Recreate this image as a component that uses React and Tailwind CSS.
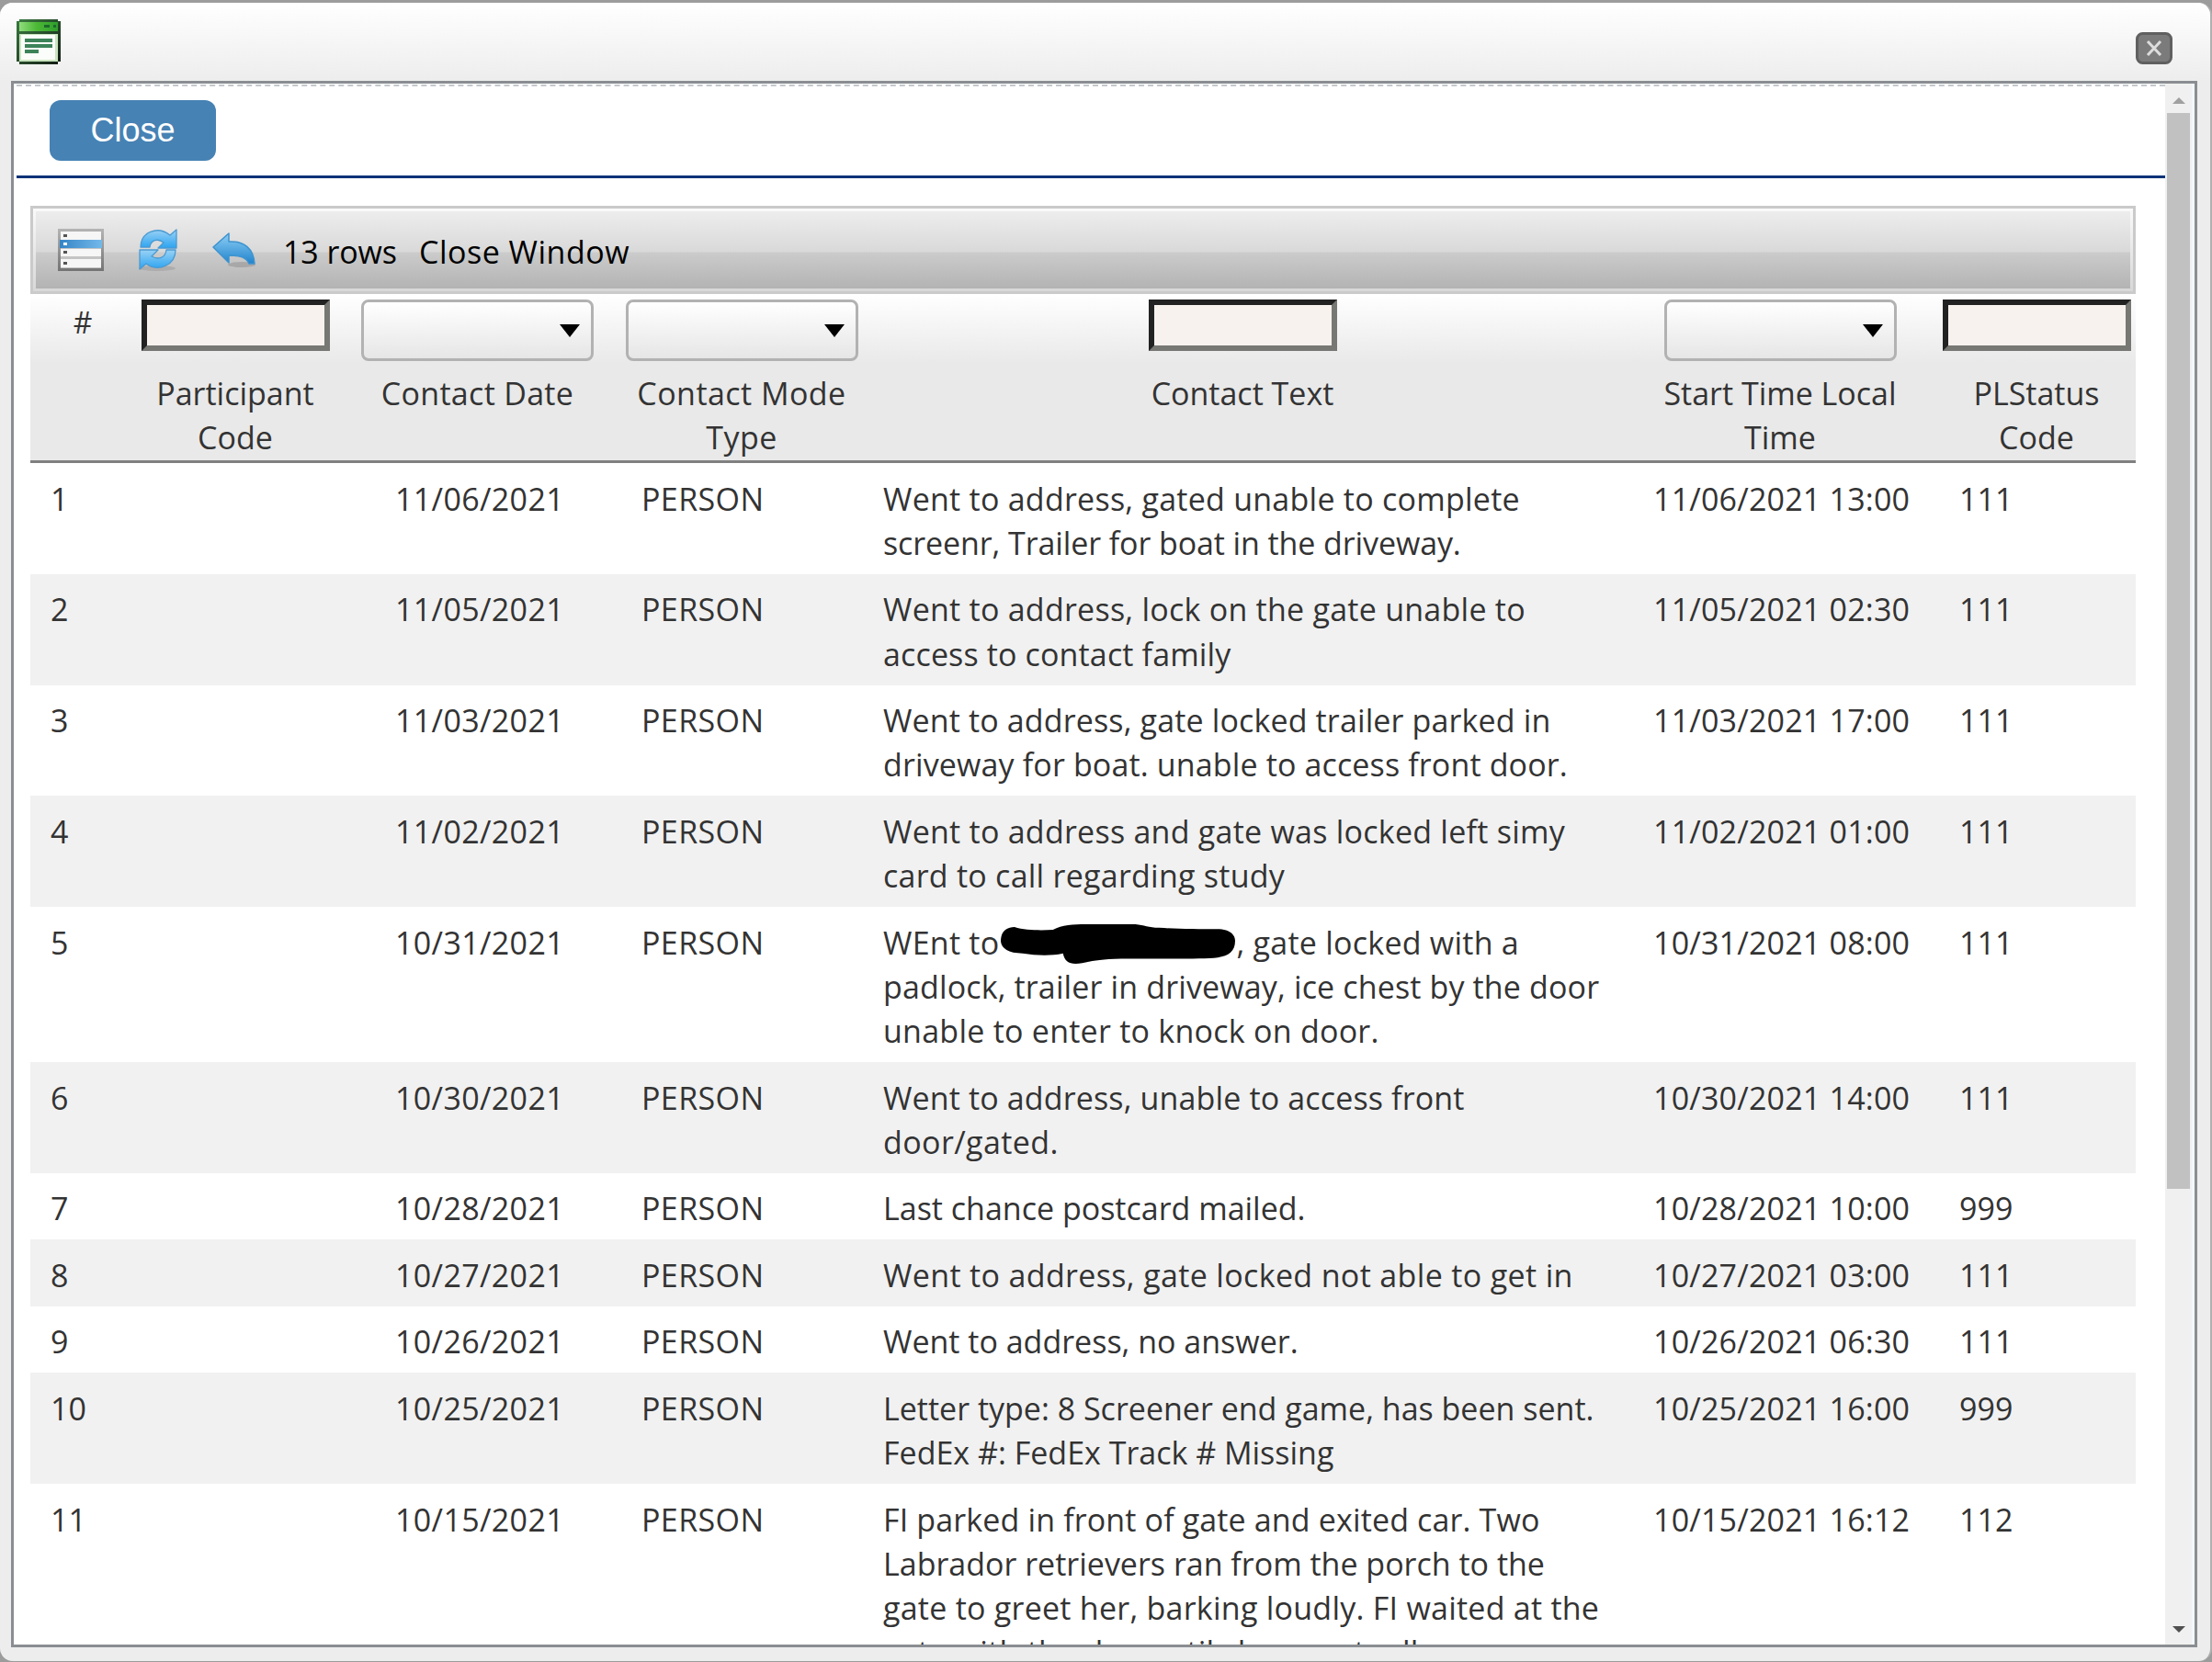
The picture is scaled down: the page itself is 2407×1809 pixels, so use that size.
import React from 'react';

const snug = 'tracking-[-0.1px]';
const loose = 'tracking-[0.14px]';
const wide = 'tracking-[0.25px]';

const rows = [
	['11/06/2021', '13:00', '111', [['Went to address, gated unable to complete', wide], ['screenr, Trailer for boat in the driveway.', snug]]],
	['11/05/2021', '02:30', '111', [['Went to address, lock on the gate unable to', wide], ['access to contact family', loose]]],
	['11/03/2021', '17:00', '111', [['Went to address, gate locked trailer parked in', loose], ['driveway for boat. unable to access front door.', loose]]],
	['11/02/2021', '01:00', '111', [['Went to address and gate was locked left simy', wide], ['card to call regarding study', wide]]],
	['10/31/2021', '08:00', '111', [[<Redacted key="r" />, wide], ['padlock, trailer in driveway, ice chest by the door', loose], ['unable to enter to knock on door.', wide]]],
	['10/30/2021', '14:00', '111', [['Went to address, unable to access front', loose], ['door/gated.', 'tracking-[0.4px]']]],
	['10/28/2021', '10:00', '999', [['Last chance postcard mailed.']]],
	['10/27/2021', '03:00', '111', [['Went to address, gate locked not able to get in', 'tracking-[0.35px]']]],
	['10/26/2021', '06:30', '111', [['Went to address, no answer.']]],
	['10/25/2021', '16:00', '999', [['Letter type: 8 Screener end game, has been sent.'], ['FedEx #: FedEx Track # Missing']]],
	['10/15/2021', '16:12', '112', [['FI parked in front of gate and exited car. Two', loose], ['Labrador retrievers ran from the porch to the'], ['gate to greet her, barking loudly. FI waited at the', wide], ['gate with the dog until she eventually', wide]]],
];

const cols = 'grid grid-cols-[114px_218px_309px_266px_824px_346px_212px]';

function Redacted() {
	return (
		<span className="flex">
			<span>WEnt to</span>
			<svg className="mt-[4px] ml-[1px] h-[43px] w-[257px] shrink-0" viewBox="0 1 258 57" preserveAspectRatio="none">
				<path d="M1 26C1 12 6 6 16 5C28 10 45 10 58 9C68 2 80 1 94 1H148C158 2 162 6 174 6C194 8 215 8 240 8C250 9 257 15 257 25C257 40 250 47 238 49C218 52 165 50 125 51C108 52 100 54 90 57C77 60 71 56 69 43C55 47 40 46 25 43C9 43 2 36 1 26Z" />
			</svg>
			<span>, gate locked with a</span>
		</span>
	);
}

function Field() {
	return <div className="mt-[6px] h-[56px] w-[205px] border-[6px] border-t-[#222222] border-l-[#222222] border-r-[#777874] border-b-[#777874] bg-[#f7f2ee]" />;
}

function Dropdown() {
	return (
		<div className="mt-[6px] flex h-[67px] w-[253px] items-start justify-end rounded-lg border-[3px] border-[#b2b2b2] bg-linear-to-b from-white to-[#e6e6e6] pt-[23px] pr-[11px]">
			<svg width="24" height="16" viewBox="0 0 24 16"><path d="M1 1H23L12 15Z" /></svg>
		</div>
	);
}

function Heading({ control, lines, className }) {
	return (
		<div className="flex flex-col items-center">
			<div className="h-[84px]">{control}</div>
			{lines.map(l => <div key={l} className={`whitespace-nowrap ${className || ''}`}>{l}</div>)}
		</div>
	);
}

function WindowIcon() {
	return (
		<svg className="h-[49px] w-[48px]" viewBox="0 0 48 49">
			<defs>
				<linearGradient id="win" x2="1"><stop stopColor="#8fdc7c" /><stop offset=".45" stopColor="#4cb836" /><stop offset="1" stopColor="#2f9e2c" /></linearGradient>
				<linearGradient id="edge" x2="1" y2="1"><stop stopColor="#3b7a42" /><stop offset="1" stopColor="#111a12" /></linearGradient>
			</defs>
			<path d="M3 0H45V2H48V46H45V49H3V46H0V2H3Z" fill="url(#edge)" />
			<path d="M3 3H45V13H3Z" fill="url(#win)" />
			<path d="M3 16H45V46H3Z" fill="#c9e4bf" />
			<path d="M5 17H42V44H5Z" fill="#fbfdfa" />
			<path d="M30 6H36V9H30ZM40 6H43V9H40Z" fill="#1c6a2c" />
			<path d="M9 21H39V25H9ZM9 27H39V31H9ZM9 33H24V37H9Z" fill="#3d8359" />
		</svg>
	);
}

function ListIcon() {
	return (
		<svg className="h-[46px] w-[50px]" viewBox="0 0 50 46">
			<defs>
				<linearGradient id="sel" x2="1"><stop stopColor="#3585c6" /><stop offset="1" stopColor="#72b8ea" /></linearGradient>
				<linearGradient id="frame" x2="0" y2="1"><stop stopColor="#b4b4b4" /><stop offset="1" stopColor="#747474" /></linearGradient>
			</defs>
			<path d="M0 0H50V46H0Z" fill="url(#frame)" />
			<path d="M3 3H47V43H3Z" fill="#c4c4c4" />
			<path d="M3 3H47V12H3ZM3 22H47V30H3ZM3 33H47V42H3Z" fill="#f6f6f6" />
			<path d="M2 12H48V21H2Z" fill="url(#sel)" />
			<path d="M6 6H10V9H6ZM6 24H10V27H6ZM6 36H10V39H6Z" fill="#555" />
			<path d="M6 15H10V18H6Z" fill="#fff" />
		</svg>
	);
}

function RefreshIcon() {
	return (
		<svg className="h-[46px] w-[46px]" viewBox="0 0 46 46">
			<defs><linearGradient id="ref" x2="0" y2="1"><stop stopColor="#9ad2f5" /><stop offset="1" stopColor="#2ba3f0" /></linearGradient></defs>
			<ellipse cx="22" cy="43" rx="20" ry="3" fill="#999" opacity=".5" />
			<g fill="url(#ref)" stroke="#4b9ad2" strokeWidth="1.3" strokeLinejoin="round">
				<path d="M4 20C4 4 22 -4 36 7L43 1V21H23L29 15C23 10 15 12 14 20Z" />
				<path d="M42 23C42 39 24 48 10 38L3 44V23H23L16 30C23 34 31 32 32 23Z" />
			</g>
		</svg>
	);
}

function BackIcon() {
	return (
		<svg className="h-[40px] w-[48px]" viewBox="0 0 48 40">
			<defs><linearGradient id="back" x2="0" y2="1"><stop stopColor="#8ed0f7" /><stop offset="1" stopColor="#2183cb" /></linearGradient></defs>
			<ellipse cx="32" cy="36" rx="15" ry="3" fill="#888" opacity=".45" />
			<path d="M1 17L18 2V11C35 10 45 19 46 35H40C37 28 30 26 18 26V34Z" fill="url(#back)" stroke="#3e93cf" strokeWidth="1.5" strokeLinejoin="round" />
		</svg>
	);
}

function Toolbar() {
	return (
		<div className="h-[96px] border-[3px] border-[#cacaca] bg-linear-to-b from-[#fafafa] to-[#d8d8d8] p-[3px]">
			<div className="flex h-[84px] items-center bg-[linear-gradient(to_bottom,#ededed_0%,#d9d9d9_52%,#cbcbcb_54%,#b3b3b3_100%)] pl-[24px] text-black">
				<ListIcon />
				<div className="ml-[36px]"><RefreshIcon /></div>
				<div className="ml-[36px]"><BackIcon /></div>
				<span className="ml-[29px] w-[148px] pt-[4px] tracking-[-0.1px] whitespace-nowrap">13 rows</span>
				<span className="pt-[4px] tracking-[0.5px] whitespace-nowrap">Close Window</span>
			</div>
		</div>
	);
}

function Scrollbar() {
	return (
		<div className="flex w-[32px] shrink-0 flex-col border-r-[3px] border-[#f2f7fa] bg-[#f0f0f0] pl-[2px]">
			<div className="flex h-[32px] w-[25px] justify-center pt-[15px]">
				<svg width="14" height="7" viewBox="0 0 14 7"><path d="M0 7L7 0L14 7Z" fill="#a0a0a0" /></svg>
			</div>
			<div className="h-[1171px] w-[25px] bg-[#c1c1c1]" />
			<div className="mt-auto flex h-[20px] w-[25px] justify-center">
				<svg width="14" height="7" viewBox="0 0 14 7"><path d="M0 0H14L7 7Z" fill="#505050" /></svg>
			</div>
		</div>
	);
}

export default function App() {
	return (
		<div className="h-[1809px] w-[2407px] overflow-hidden bg-[#9c9c9c] pt-[3px] font-['Open_Sans','Noto_Sans',sans-serif] text-[34px] leading-[48.25px] text-[#333333]">
			<div className="flex h-[1805px] flex-col rounded-[14px] border-r-2 border-[#b0b0b0] bg-[#ededed] pr-[14px] pb-[15px] pl-[12px]">
				<div className="-mr-[14px] -ml-[12px] flex h-[85px] shrink-0 items-start justify-between rounded-t-[14px] bg-linear-to-b from-white to-[#ededed] pt-[18px] pr-[41px] pl-[18px]">
					<WindowIcon />
					<svg className="mt-[14px] h-[35px] w-[40px]" viewBox="0 0 40 35">
						<rect x="1.5" y="1.5" width="37" height="32" rx="6" fill="#7b7b7b" stroke="#606060" strokeWidth="3" />
						<path d="M13 10L27 25M27 10L13 25" stroke="#dddddd" strokeWidth="3" />
					</svg>
				</div>
				<div className="flex min-h-0 grow overflow-hidden border-[3px] border-[#8a8e92] bg-white">
					<div className="flex min-w-0 grow flex-col overflow-hidden pl-[3px]">
						<div className="h-[3px] shrink-0 border-b-2 border-dashed border-[#c3c8cc]" />
						<div className="flex h-[100px] shrink-0 items-start border-b-[3px] border-[#0a3278] pt-[15px] pl-[36px]">
							<button className="h-[66px] w-[181px] rounded-xl bg-[#4682b4] font-['Liberation_Sans',sans-serif] text-[36px] text-white">Close</button>
						</div>
						<div className="mt-[30px] ml-[15px] w-[2291px] shrink-0">
							<Toolbar />
							<div className={`${cols} h-[184px] border-b-[3px] border-[#808080] bg-[linear-gradient(to_bottom,#ffffff_0px,#e9e9e9_75px)]`}>
								<div className="pt-[7px] text-center text-[32px]">#</div>
								<Heading control={<Field />} lines={['Participant', 'Code']} />
								<Heading control={<Dropdown />} lines={['Contact Date']} className="tracking-[0.3px]" />
								<Heading control={<Dropdown />} lines={['Contact Mode', 'Type']} className="tracking-[0.45px]" />
								<Heading control={<Field />} lines={['Contact Text']} />
								<Heading control={<Dropdown />} lines={['Start Time Local', 'Time']} />
								<Heading control={<Field />} lines={['PLStatus', 'Code']} />
							</div>
							{rows.map(([date, time, status, text], i) => (
								<div key={date} className={`${cols} whitespace-nowrap pt-[14.5px] pb-[9.75px] odd:bg-white even:bg-[#f1f1f1]`}>
									<div className="pl-[22px]">{i + 1}</div>
									<div />
									<div className="pl-[65px] tracking-[0.35px]">{date}</div>
									<div className="pl-[24px] tracking-[0.4px]">PERSON</div>
									<div className="pl-[21px]">{text.map(([line, spacing], n) => <div key={n} className={`h-[48.25px] ${spacing || ''}`}>{line}</div>)}</div>
									<div className="pl-[35px] tracking-[0.2px]">{date} {time}</div>
									<div className="pl-[22px]">{status}</div>
								</div>
							))}
						</div>
					</div>
					<Scrollbar />
				</div>
			</div>
		</div>
	);
}
